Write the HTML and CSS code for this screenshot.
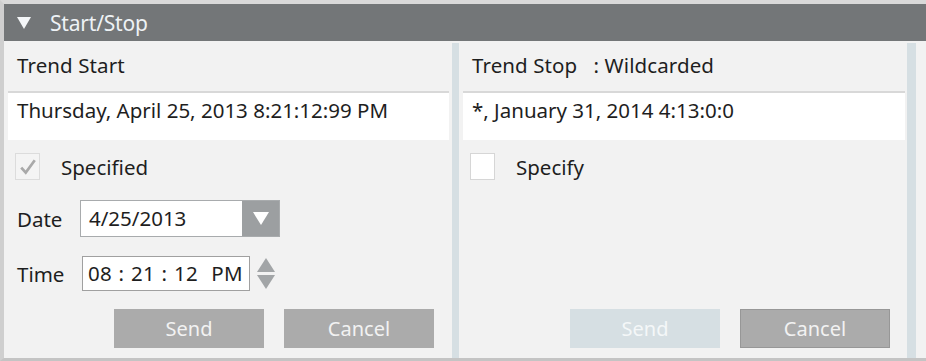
FILE: index.html
```html
<!DOCTYPE html>
<html lang="en">
<head>
    <meta charset="UTF-8">
    <title>Start/Stop</title>
    <link rel="stylesheet" href="styles.css">
</head>
<body>

    <div class="panel">
        <div class="panel-header">
            <span class="caret"></span>
            <span class="panel-title">Start/Stop</span>
        </div>

        <div class="panel-body">
            <!-- Trend Start -->
            <div class="column">
                <div class="col-title">Trend Start</div>
                <div class="value-box">Thursday, April 25, 2013 8:21:12:99 PM</div>
                <div class="check-row">
                    <span class="checkbox checked">
                        <svg width="18" height="18" viewBox="0 0 16 16"><path d="M2 8.5 L6 13 L14 2" fill="none" stroke="#a9a9a9" stroke-width="2.4"/></svg>
                    </span>
                    <span>Specified</span>
                </div>
                <div class="field-row date-row">
                    <span class="field-label">Date</span>
                    <div class="combo">
                        <span class="combo-text">4/25/2013</span>
                        <span class="combo-btn"><span class="tri-down white"></span></span>
                    </div>
                </div>
                <div class="field-row time-row">
                    <span class="field-label">Time</span>
                    <div class="time-box">08 : 21 : 12 &nbsp;PM</div>
                    <div class="spinner">
                        <span class="tri-up"></span>
                        <span class="tri-down"></span>
                    </div>
                </div>
                <div class="buttons">
                    <button class="btn">Send</button>
                    <button class="btn">Cancel</button>
                </div>
            </div>

            <div class="divider"></div>

            <!-- Trend Stop -->
            <div class="column">
                <div class="col-title">Trend Stop &nbsp;&nbsp;: Wildcarded</div>
                <div class="value-box">*, January 31, 2014 4:13:0:0</div>
                <div class="check-row">
                    <span class="checkbox"></span>
                    <span>Specify</span>
                </div>
                <div class="buttons">
                    <button class="btn disabled">Send</button>
                    <button class="btn bordered">Cancel</button>
                </div>
            </div>

            <div class="divider right"></div>
            <div class="gutter"></div>
        </div>
    </div>

</body>
</html>
```

FILE: styles.css
```css
body {
    margin: 0;
    background-color: #f2f2f2;
    font-family: "Noto Sans", "Open Sans", sans-serif;
    color: #1e1e1e;
}

.panel {
    border-top: 4px solid #d9d9d9;
    border-left: 4px solid #cfcfcf;
    border-bottom: 3px solid #c4c4c4;
    height: 361px;
    box-sizing: border-box;
    display: flex;
    flex-direction: column;
}

.panel-header {
    background-color: #737678;
    height: 37px;
    display: flex;
    align-items: center;
    color: #eef2f5;
}
.caret {
    width: 0;
    height: 0;
    border-left: 7px solid transparent;
    border-right: 7px solid transparent;
    border-top: 12px solid #f4f6f8;
    margin-left: 13px;
    margin-right: 19px;
}
.panel-title {
    font-size: 21px;
    letter-spacing: -0.2px;
}

.panel-body {
    flex: 1;
    display: flex;
}

.column {
    width: 448px;
    padding: 0 3px 10px 4px;
    box-sizing: border-box;
    display: flex;
    flex-direction: column;
    font-size: 20.5px;
}
.column:nth-child(3) {
    padding-right: 2px;
}

.divider {
    width: 7px;
    background-color: #d6dfe3;
    margin-top: 2px;
}
.divider.right {
    width: 9px;
}
.gutter {
    flex: 1;
}

.col-title {
    height: 50px;
    line-height: 48px;
    padding-left: 9px;
    letter-spacing: 0.1px;
}

.value-box {
    background-color: #ffffff;
    border-top: 2px solid #d8d8d8;
    padding: 5px 0 0 9px;
    line-height: 24px;
    height: 42px;
}

.check-row {
    display: flex;
    align-items: center;
    margin-top: 13px;
    height: 27px;
    padding-left: 7px;
}
.checkbox {
    width: 23px;
    height: 25px;
    border: 1px solid #d6d6d6;
    background-color: #ffffff;
    margin-right: 21px;
    display: flex;
    align-items: center;
    justify-content: center;
}
.checkbox.checked {
    background-color: #f4f4f4;
    border-color: #dcdcdc;
}

.field-row {
    display: flex;
    align-items: center;
}
.field-label {
    width: 72px;
    padding-left: 9px;
    box-sizing: border-box;
}
.date-row {
    margin-top: 20px;
    height: 37px;
}
.time-row {
    margin-top: 19px;
    height: 35px;
}
.time-row .field-label {
    width: 74px;
}

.combo {
    display: flex;
    width: 200px;
    height: 37px;
    box-sizing: border-box;
    border: 1px solid #a8abad;
}
.combo-text {
    flex: 1;
    background-color: #ffffff;
    line-height: 35px;
    padding-left: 8px;
}
.combo-btn {
    width: 37px;
    background-color: #9c9fa1;
    display: flex;
    align-items: center;
    justify-content: center;
}

.time-box {
    width: 168px;
    height: 35px;
    box-sizing: border-box;
    border: 1px solid #a0a0a0;
    background-color: #ffffff;
    line-height: 33px;
    padding-left: 5px;
    white-space: nowrap;
    overflow: hidden;
    word-spacing: 1.2px;
    letter-spacing: 0.2px;
}

.spinner {
    margin-left: 7px;
    display: flex;
    flex-direction: column;
    gap: 3px;
}

.tri-down,
.tri-up {
    width: 0;
    height: 0;
    border-left: 9px solid transparent;
    border-right: 9px solid transparent;
}
.tri-down {
    border-top: 14px solid #a2a5a7;
}
.tri-up {
    border-bottom: 14px solid #a2a5a7;
}
.tri-down.white {
    border-left-width: 8px;
    border-right-width: 8px;
    border-top: 13px solid #ffffff;
}

.buttons {
    margin-top: auto;
    display: flex;
    justify-content: flex-end;
    gap: 20px;
    padding-right: 15px;
}
.btn {
    width: 150px;
    height: 39px;
    border: none;
    background-color: #ababab;
    color: #f2f2f2;
    font-family: "Noto Sans", "Open Sans", sans-serif;
    font-size: 20px;
}
.btn.disabled {
    background-color: #d6dfe3;
    color: #f4f7f8;
}
.btn.bordered {
    border: 1px solid #979797;
}
```
